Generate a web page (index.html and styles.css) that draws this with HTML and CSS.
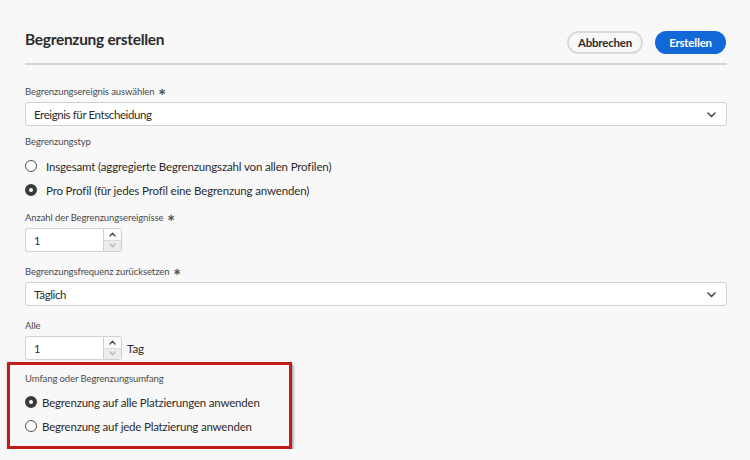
FILE: index.html
```html
<!DOCTYPE html>
<html lang="de">
<head>
    <meta charset="UTF-8">
    <meta name="viewport" content="width=device-width, initial-scale=1.0">
    <title>Begrenzung erstellen</title>
    <link rel="stylesheet" href="styles.css">
</head>
<body>
    <div class="pagina">
        <div class="cabecalho">
            <h1 class="titulo">Begrenzung erstellen</h1>
            <div class="acoes">
                <button class="botao secundario">Abbrechen</button>
                <button class="botao primario">Erstellen</button>
            </div>
        </div>

        <div class="formulario">
            <div class="campo">
                <label class="rotulo">Begrenzungsereignis auswählen <span class="obrigatorio">∗</span></label>
                <div class="seletor">
                    <span>Ereignis für Entscheidung</span>
                    <svg class="seta" width="9" height="6" viewBox="0 0 9 6"><polyline points="1,1 4.5,4.5 8,1" fill="none" stroke="#4b4b4b" stroke-width="1.6" stroke-linecap="round" stroke-linejoin="round"/></svg>
                </div>
            </div>

            <div class="campo">
                <label class="rotulo">Begrenzungstyp</label>
                <div class="opcoes">
                    <div class="opcao"><span class="radio"></span>Insgesamt (aggregierte Begrenzungszahl von allen Profilen)</div>
                    <div class="opcao"><span class="radio marcado"></span>Pro Profil (für jedes Profil eine Begrenzung anwenden)</div>
                </div>
            </div>

            <div class="campo">
                <label class="rotulo">Anzahl der Begrenzungsereignisse <span class="obrigatorio">∗</span></label>
                <div class="linha">
                    <div class="numero">
                        <span class="valor">1</span>
                        <div class="passos">
                            <span class="passo"><svg width="7" height="5" viewBox="0 0 7 5"><polyline points="1,4 3.5,1.2 6,4" fill="none" stroke="#4b4b4b" stroke-width="1.3" stroke-linecap="round"/></svg></span>
                            <span class="passo desativado"><svg width="7" height="5" viewBox="0 0 7 5"><polyline points="1,1 3.5,3.8 6,1" fill="none" stroke="#b9b9b9" stroke-width="1.3" stroke-linecap="round"/></svg></span>
                        </div>
                    </div>
                </div>
            </div>

            <div class="campo">
                <label class="rotulo">Begrenzungsfrequenz zurücksetzen <span class="obrigatorio">∗</span></label>
                <div class="seletor">
                    <span>Täglich</span>
                    <svg class="seta" width="9" height="6" viewBox="0 0 9 6"><polyline points="1,1 4.5,4.5 8,1" fill="none" stroke="#4b4b4b" stroke-width="1.6" stroke-linecap="round" stroke-linejoin="round"/></svg>
                </div>
            </div>

            <div class="campo">
                <label class="rotulo">Alle</label>
                <div class="linha">
                    <div class="numero">
                        <span class="valor">1</span>
                        <div class="passos">
                            <span class="passo"><svg width="7" height="5" viewBox="0 0 7 5"><polyline points="1,4 3.5,1.2 6,4" fill="none" stroke="#4b4b4b" stroke-width="1.3" stroke-linecap="round"/></svg></span>
                            <span class="passo desativado"><svg width="7" height="5" viewBox="0 0 7 5"><polyline points="1,1 3.5,3.8 6,1" fill="none" stroke="#b9b9b9" stroke-width="1.3" stroke-linecap="round"/></svg></span>
                        </div>
                    </div>
                    <span class="unidade">Tag</span>
                </div>
            </div>

            <!-- bloco marcado em vermelho -->
            <div class="destaque">
                <label class="rotulo">Umfang oder Begrenzungsumfang</label>
                <div class="opcoes">
                    <div class="opcao"><span class="radio marcado"></span>Begrenzung auf alle Platzierungen anwenden</div>
                    <div class="opcao"><span class="radio"></span>Begrenzung auf jede Platzierung anwenden</div>
                </div>
            </div>
        </div>
    </div>
</body>
</html>
```
FILE: styles.css
```css
* {
    margin: 0;
    padding: 0;
    box-sizing: border-box;
}

body {
    background-color: #f8f8f8;
    font-family: Lato, "Noto Sans", sans-serif;
    color: #2c2c2c;
}

.pagina {
    padding: 31px 23px 0 25px;
}

.cabecalho {
    display: flex;
    justify-content: space-between;
    align-items: flex-start;
    padding-bottom: 9px;
    border-bottom: 2px solid #d6d6d6;
}

.titulo {
    margin-top: -2px;
    font-size: 15.5px;
    line-height: 20px;
    font-weight: 700;
    letter-spacing: -0.3px;
    color: #2c2c2c;
}

.acoes {
    display: flex;
    gap: 12px;
    margin-right: 1px;
}

.botao {
    height: 23px;
    border-radius: 12px;
    font-family: Lato, sans-serif;
    font-size: 11.5px;
    font-weight: 700;
    letter-spacing: -0.2px;
    cursor: pointer;
}

.secundario {
    width: 76px;
    border: 2px solid #dadada;
    background-color: #f8f8f8;
    color: #2c2c2c;
}

.primario {
    width: 71px;
    border: none;
    background-color: #1268d6;
    color: #fff;
}

.formulario {
    padding-top: 21px;
}

.campo {
    margin-bottom: 10px;
}

.campo:nth-child(3) {
    margin-bottom: 14px;
}

.campo:nth-child(4) {
    margin-bottom: 14px;
}

.campo:nth-child(5) {
    margin-bottom: 2px;
}

.rotulo {
    display: block;
    font-size: 9.5px;
    line-height: 12px;
    letter-spacing: -0.1px;
    color: #4b4b4b;
    margin-bottom: 4px;
}

.obrigatorio {
    font-family: "DejaVu Sans", sans-serif;
    font-size: 10px;
    font-weight: 700;
    line-height: 0;
    margin-left: 1px;
    color: #555;
}

.seletor {
    display: flex;
    align-items: center;
    justify-content: space-between;
    height: 24px;
    padding: 1px 10px 0 8px;
    background-color: #fff;
    border: 1px solid #d0d0d0;
    border-radius: 3px;
    font-size: 11.5px;
    letter-spacing: -0.4px;
}

.opcoes {
    margin-top: 6px;
}

.opcao {
    display: flex;
    align-items: center;
    gap: 9px;
    height: 24px;
    font-size: 11.5px;
    letter-spacing: -0.15px;
}

.radio {
    width: 12px;
    height: 12px;
    border: 1.5px solid #505050;
    border-radius: 50%;
    background-color: #fff;
}

.radio.marcado {
    border: 4px solid #3a3a3a;
}

.linha {
    display: flex;
    align-items: center;
    gap: 5px;
}

.numero {
    display: flex;
    width: 97px;
    height: 24px;
}

.valor {
    flex: 1;
    display: flex;
    align-items: center;
    padding-left: 8px;
    background-color: #fff;
    border: 1px solid #d0d0d0;
    border-right: none;
    border-radius: 3px 0 0 3px;
    font-size: 11px;
}

.passos {
    width: 19px;
    display: flex;
    flex-direction: column;
    border: 1px solid #d0d0d0;
    border-radius: 0 3px 3px 0;
    overflow: hidden;
}

.passo {
    flex: 1;
    display: flex;
    align-items: center;
    justify-content: center;
    background-color: #fbfbfb;
}

.passo.desativado {
    background-color: #ececec;
    border-top: 1px solid #dcdcdc;
}

.unidade {
    font-size: 11.5px;
    letter-spacing: -0.1px;
}

.destaque {
    width: 285px;
    margin-left: -18px;
    padding: 8px 0 8px 15px;
    border: 3px solid #c11d1a;
    box-shadow: 1px 2px 3px rgba(0, 0, 0, 0.45);
}

.destaque .opcoes {
    margin-top: 5px;
}

.destaque .opcao {
    gap: 5px;
    letter-spacing: -0.2px;
}
```
